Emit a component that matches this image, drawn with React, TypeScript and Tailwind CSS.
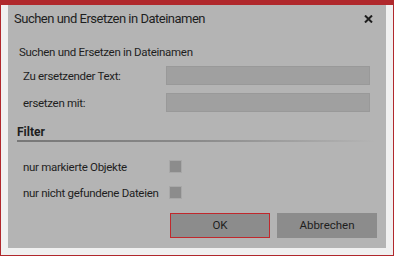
import React from "react";

const Check = () => (
  <div className="h-[13px] w-[13px] border border-[#a8a8a8] bg-[#8c8c8c]" />
);

export default function App() {
  return (
    <div
      className="flex h-[256px] w-[394px] flex-col whitespace-nowrap bg-[#b0282c]"
      style={{ fontFamily: 'Roboto, "Noto Sans", sans-serif' }}
    >
      <div className="mx-[1px] mb-[1px] mt-[5px] flex flex-1 flex-col bg-[#f0f0f0] px-[7px] pb-[7px]">
        <div className="flex flex-1 flex-col bg-[#b4b4b4] text-[#1e1e1e]">
          {/* title bar */}
          <div className="flex h-[27px] items-center justify-between pl-[6px] pr-[13px]">
            <span className="text-[13px] tracking-[-0.5px]">Suchen und Ersetzen in Dateinamen</span>
            <svg width="9" height="8" viewBox="0 0 9 8">
              <path d="M1 0.5 L8 7.5 M8 0.5 L1 7.5" stroke="#1e1e1e" strokeWidth="2" />
            </svg>
          </div>
          <div className="px-[11px] pt-[12px] text-[11.5px] leading-[16px] tracking-[-0.3px]">
            <div>Suchen und Ersetzen in Dateinamen</div>
            <div className="mt-[6px] flex h-[19px] items-center pl-[4px] pr-[5px]">
              <span className="w-[143px]">Zu ersetzender Text:</span>
              <div className="h-[19px] flex-1 border border-[#999] bg-[#a0a0a0]" />
            </div>
            <div className="mt-[8px] flex h-[19px] items-center pl-[4px] pr-[5px]">
              <span className="w-[143px]">ersetzen mit:</span>
              <div className="h-[19px] flex-1 border border-[#999] bg-[#a0a0a0]" />
            </div>
            <div className="-ml-[2px] mt-[12px] text-[12px] font-bold tracking-normal">Filter</div>
            <div className="-ml-[2px] h-[2px] bg-gradient-to-r from-[#777] via-[#8a8a8a] to-[#b4b4b4]" />
            <div className="mt-[18px] flex h-[13px] items-center pl-[4px]">
              <span className="w-[146px]">nur markierte Objekte</span>
              <Check />
            </div>
            <div className="mt-[13px] flex h-[13px] items-center pl-[4px]">
              <span className="w-[146px]">nur nicht gefundene Dateien</span>
              <Check />
            </div>
          </div>
          <div className="mt-auto flex justify-end gap-[7px] pb-[10px] pr-[9px]">
            <button className="h-[25px] w-[100px] border border-[#c0282c] bg-[#8c8c8c] text-[11.5px] text-[#1e1e1e]">
              OK
            </button>
            <button className="h-[25px] w-[100px] border border-[#8c8c8c] bg-[#8c8c8c] text-[11.5px] text-[#1e1e1e]">
              Abbrechen
            </button>
          </div>
        </div>
      </div>
    </div>
  );
}
